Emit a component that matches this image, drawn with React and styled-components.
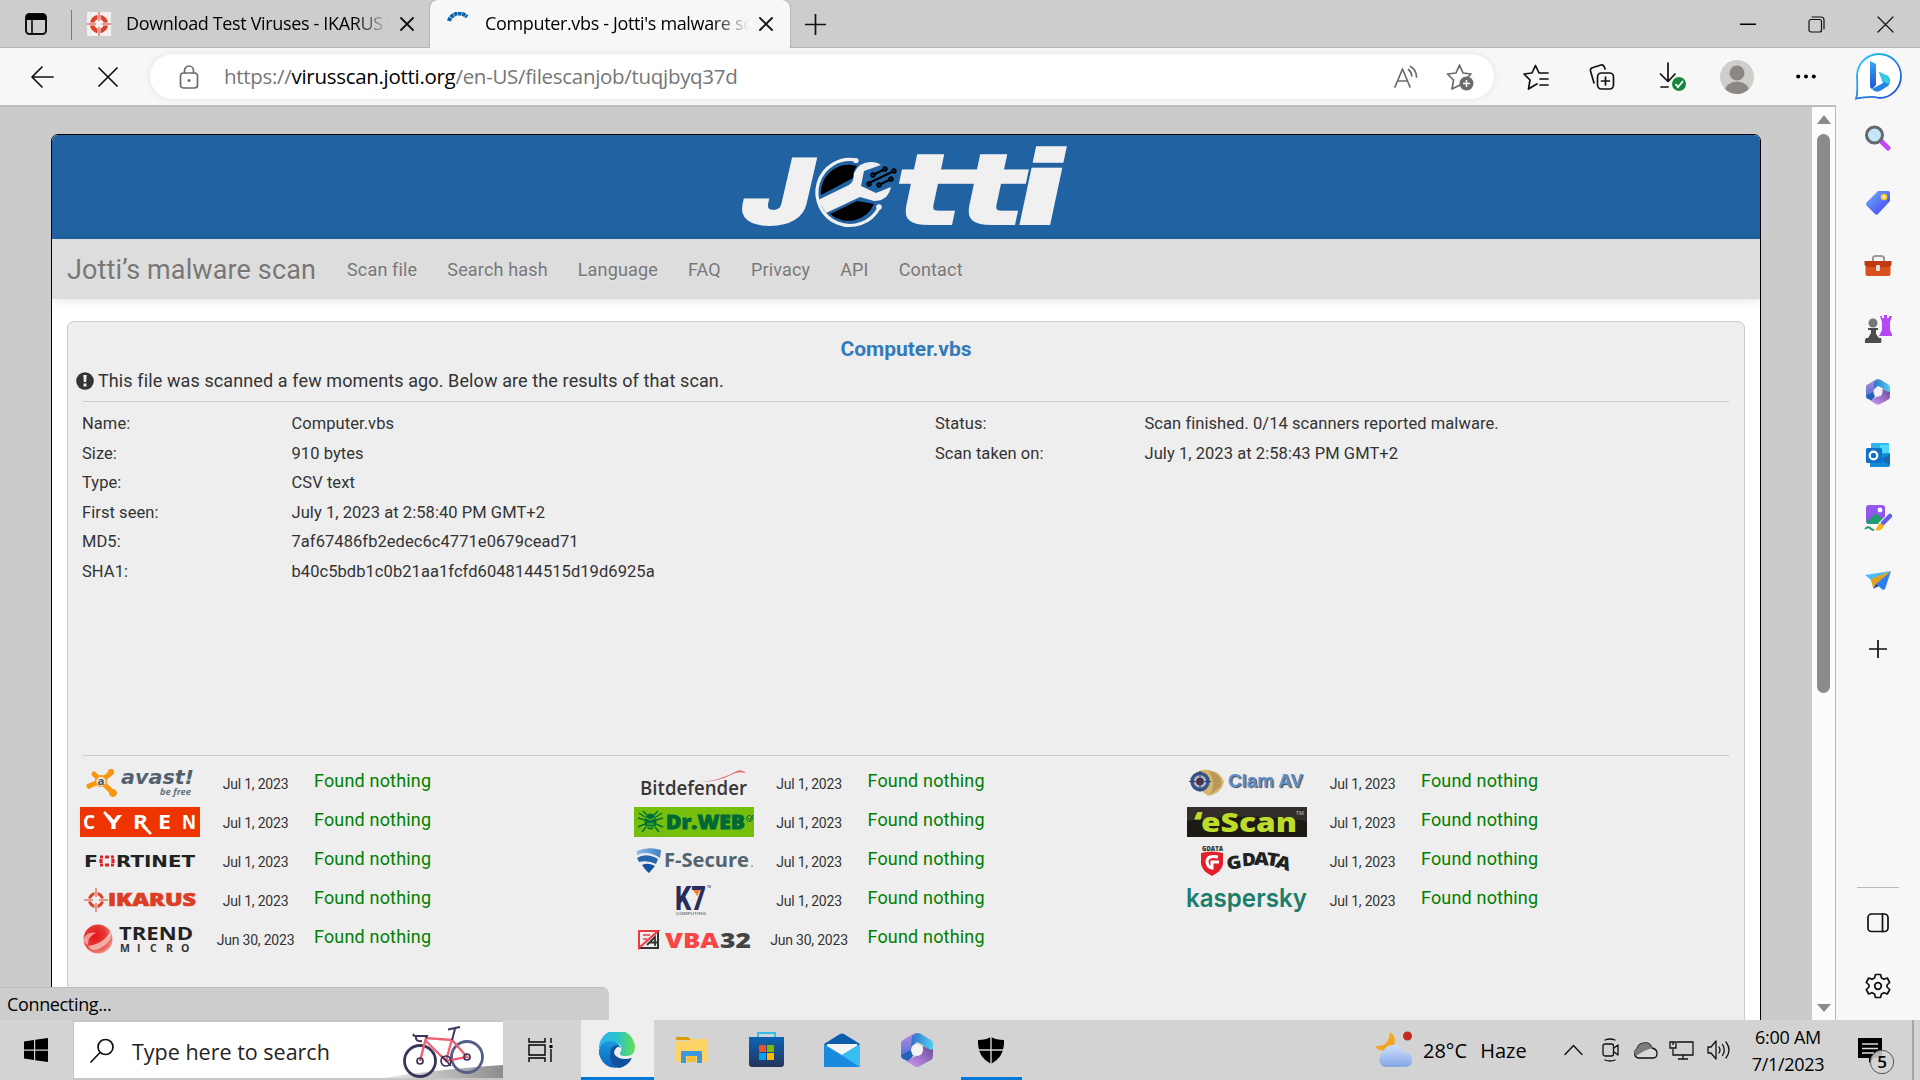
import React from "react";
import styled, { createGlobalStyle, css } from "styled-components";

const Global = createGlobalStyle`
  * { box-sizing: border-box; }
  html, body { margin: 0; padding: 0; overflow: hidden; }
  svg { display: block; flex: none; }
`;

const ui = css`font-family: "Open Sans", "Noto Sans", sans-serif;`;
const web = css`font-family: Roboto, "Liberation Sans", sans-serif;`;

const Screen = styled.div`
  ${ui}
  width: 1920px;
  height: 1080px;
  display: flex;
  flex-direction: column;
  background: #cbcbcb;
  overflow: hidden;
  color: #000;
`;

/* ---------- tab strip ---------- */
const TabStrip = styled.header`
  height: 48px;
  flex: none;
  display: flex;
  background: #cdcdcd;
  box-shadow: inset 0 -1px 0 #b5b5b5;
`;
const TabMenu = styled.div`
  width: 72px;
  display: flex;
  align-items: center;
  padding-left: 24px;
  position: relative;
  &::after {
    content: "";
    position: absolute;
    right: 0;
    top: 10px;
    width: 1px;
    height: 30px;
    background: #7a7a7a;
  }
`;
const Tab = styled.div`
  width: ${(p) => p.$w}px;
  padding-left: ${(p) => p.$pad}px;
  display: flex;
  align-items: center;
  height: 48px;
  ${(p) => p.$active && css`
    background: #f7f7f7;
    border-radius: 8px 8px 0 0;
    box-shadow: 0 0 2px rgba(0, 0, 0, 0.35);
    clip-path: inset(-2px -3px 0 -3px);
  `}
`;
const TabTitle = styled.span`
  width: ${(p) => p.$w}px;
  margin-left: ${(p) => p.$gap}px;
  font-size: 18px;
  line-height: 46px;
  padding-bottom: 2px;
  letter-spacing: -0.35px;
  white-space: nowrap;
  overflow: hidden;
  -webkit-mask-image: linear-gradient(90deg, #000 calc(100% - 36px), transparent);
  mask-image: linear-gradient(90deg, #000 calc(100% - 36px), transparent);
`;
const TabIcon = styled.div`
  width: 24px;
  height: 24px;
`;
const CloseMark = styled.div`
  margin-left: ${(p) => p.$gap}px;
`;
const NewTab = styled.div`
  width: 50px;
  display: flex;
  align-items: center;
  justify-content: center;
`;
const WindowButtons = styled.div`
  margin-left: auto;
  display: flex;
`;
const WindowButton = styled.div`
  width: 69px;
  display: flex;
  align-items: center;
  justify-content: center;
`;

/* ---------- main area ---------- */
const Main = styled.div`
  height: 972px;
  display: flex;
`;
const Left = styled.div`
  width: 1836px;
  display: flex;
  flex-direction: column;
  position: relative;
`;
const Toolbar = styled.div`
  height: 59px;
  flex: none;
  display: flex;
  align-items: center;
  background: #f7f7f7;
  border-bottom: 2px solid #bcbcbc;
`;
const Cell = styled.div`
  width: ${(p) => p.$w}px;
  height: 100%;
  flex: none;
  display: flex;
  align-items: center;
  justify-content: center;
  padding-top: ${(p) => p.$drop || 0}px;
`;
const AddressBar = styled.div`
  width: 1344px;
  flex: none;
  height: 45px;
  border-radius: 23px;
  background: #fff;
  box-shadow: 0 0 7px rgba(0, 0, 0, 0.09);
  display: flex;
  align-items: center;
  padding: 0 6px 0 28px;
`;
const Url = styled.div`
  margin-left: 24px;
  flex: 1;
  font-size: 20.5px;
  letter-spacing: -0.3px;
  line-height: 43px;
  color: #767676;
  white-space: nowrap;
  b { font-weight: 400; color: #000; }
`;
const Viewport = styled.div`
  flex: 1;
  min-height: 0;
  display: flex;
`;
const PageArea = styled.main`
  width: 1812px;
  padding: 27px 51px 0;
  overflow: hidden;
  background: #cbcbcb;
`;
const ScrollTrack = styled.div`
  width: 24px;
  background: #fcfcfc;
  border-right: 1px solid #b9b9b9;
  display: flex;
  flex-direction: column;
  align-items: center;
`;
const ScrollThumb = styled.div`
  width: 13px;
  height: 559px;
  border-radius: 7px;
  background: #8b8b8b;
`;
const ScrollArrow = styled.div`
  height: 27px;
  display: flex;
  align-items: center;
  justify-content: center;
  padding-bottom: 2px;
  &:last-child { margin-top: auto; height: 24px; padding: 0; }
`;
const StatusBubble = styled.div`
  position: absolute;
  left: 0;
  bottom: 0;
  width: 609px;
  height: 33px;
  padding-left: 7px;
  background: #cdcdcd;
  border-top: 1px solid #bdbdbd;
  border-radius: 0 7px 0 0;
  font-size: 18px;
  letter-spacing: -0.35px;
  line-height: 32px;
`;

/* ---------- web page ---------- */
const Site = styled.div`
  ${web}
  width: 1710px;
  height: 1100px;
  border: 1px solid #000;
  border-radius: 7px;
  background: #fff;
  color: #333;
  overflow: hidden;
`;
const Banner = styled.div`
  height: 104px;
  background: #2162a2;
  display: flex;
  justify-content: center;
`;
const Nav = styled.nav`
  height: 60px;
  padding: 2px 0 0 15px;
  background: #ddd;
  box-shadow: 0 1px 8px rgba(0, 0, 0, 0.12);
  display: flex;
  align-items: center;
  color: #777;
  text-shadow: 0 1px 0 rgba(255, 255, 255, 0.35);
`;
const Brand = styled.span`
  width: 265px;
  font-size: 27px;
  line-height: 58px;
  letter-spacing: 0.12px;
  white-space: nowrap;
`;
const NavLink = styled.a`
  padding: 0 15px;
  font-size: 18px;
  line-height: 58px;
  letter-spacing: 0.16px;
  white-space: nowrap;
`;
const Card = styled.section`
  margin: 22px 15px 0;
  height: 900px;
  border: 1px solid #ccc;
  border-radius: 7px;
  background: #eee;
  padding: 10px 14px 0;
`;
const Title = styled.h1`
  margin: 0;
  font-size: 21px;
  line-height: 34px;
  font-weight: 700;
  color: #337ab7;
  text-align: center;
`;
const Notice = styled.p`
  margin: 0 0 0 -6px;
  display: flex;
  align-items: center;
  gap: 4px;
  font-size: 18px;
  letter-spacing: 0.11px;
  line-height: 30px;
`;
const Rule = styled.hr`
  margin: 5px 1px 0;
  border: 0;
  height: 1px;
  background: #ccc;
`;
const Facts = styled.div`
  display: flex;
  height: 348px;
  padding-top: 7px;
`;
const FactList = styled.dl`
  margin: 0;
  flex: none;
  width: 853px;
`;
const Fact = styled.div`
  display: grid;
  grid-template-columns: 209.5px 1fr;
  font-size: 16.5px;
  letter-spacing: 0.06px;
  line-height: 29.6px;
  dt, dd { margin: 0; }
`;
const Results = styled.div`
  display: grid;
  grid-template-columns: repeat(3, 553.5px);
  grid-auto-rows: 39px;
  padding-top: 12px;
  margin-left: -2px;
`;
const Result = styled.div`
  display: flex;
  height: 30px;
  align-items: center;
`;
const ScanDate = styled.span`
  width: 111px;
  padding-top: 2px;
  text-align: center;
  font-size: 14px;
  letter-spacing: -0.2px;
`;
const Verdict = styled.span`
  margin-left: 3px;
  font-size: 18px;
  line-height: 26px;
  letter-spacing: 0.17px;
  padding-bottom: 4px;
  color: green;
`;

/* ---------- sidebar ---------- */
const Sidebar = styled.aside`
  width: 84px;
  background: #f7f7f7;
  display: flex;
  flex-direction: column;
  align-items: center;
  padding-top: 1px;
`;
const SideItem = styled.div`
  height: ${(p) => p.$h || 63}px;
  flex: none;
  display: flex;
  align-items: center;
  justify-content: center;
`;
const SideRule = styled.div`
  width: 42px;
  height: 1px;
  margin-top: auto;
  margin-bottom: 6px;
  background: #b9b9b9;
`;

/* ---------- taskbar ---------- */
const Taskbar = styled.footer`
  height: 60px;
  display: flex;
  background: #d3d3d3;
`;
const TaskCell = styled.div`
  width: ${(p) => p.$w}px;
  height: 60px;
  padding-right: ${(p) => p.$shift || 0}px;
  display: flex;
  align-items: center;
  justify-content: center;
  background: ${(p) => (p.$active ? "#eee" : "transparent")};
  box-shadow: ${(p) => (p.$open ? "inset 0 -3px 0 #0078d7" : "none")};
`;
const SearchBox = styled.div`
  width: 430px;
  height: 60px;
  background: #fff;
  border: solid #c6c6c6;
  border-width: 2px 0 2px 1px;
  display: flex;
  align-items: center;
  padding-left: 16px;
  overflow: hidden;
`;
const SearchText = styled.span`
  width: 254px;
  margin-left: 17px;
  padding-top: 3px;
  font-size: 21.5px;
  white-space: nowrap;
  color: #222;
`;
const Tray = styled.div`
  margin-left: auto;
  display: flex;
  align-items: center;
`;
const Weather = styled.div`
  width: 176px;
  display: flex;
  align-items: center;
  gap: 9px;
  font-size: 20px;
  white-space: nowrap;
  word-spacing: 8px;
`;
const Clock = styled.div`
  width: 102px;
  text-align: center;
  font-size: 18px;
  line-height: 27px;
  padding: 1px 2px 0 0;
  letter-spacing: -0.3px;
`;
const ShowDesktop = styled.div`
  width: 8px;
  height: 60px;
  border-left: 2px solid #a5a5a5;
`;

const line = { fill: "none", stroke: "#111", strokeWidth: 1.7, strokeLinecap: "round", strokeLinejoin: "round" };

const Cross = ({ s = 12, w = 1.8 }) => (
  <svg width={s + 2} height={s + 2} viewBox={`-1 -1 ${s + 2} ${s + 2}`}>
    <path d={`M0 0L${s} ${s}M${s} 0L0 ${s}`} {...line} strokeWidth={w} />
  </svg>
);
const Plus = ({ s }) => (
  <svg width={s} height={s} viewBox={`0 0 ${s} ${s}`}>
    <path d={`M${s / 2} 0V${s}M0 ${s / 2}H${s}`} {...line} strokeLinecap="butt" />
  </svg>
);
const Crosshair = ({ size }) => (
  <svg width={size} height={size} viewBox="0 0 24 24">
    <rect width="24" height="24" fill="#f5f0ee" />
    <circle cx="12" cy="12" r="7" fill="none" stroke="#d9412a" strokeWidth="4.4" />
    <path d="M12 1V23M1 12H23" stroke="#f5f0ee" strokeWidth="3" />
    <path d="M12 0V9M12 15V24M0 12H9M15 12H24" stroke="#d9412a" strokeWidth="1" />
  </svg>
);
const Office = ({ w, h, id }) => (
  <svg width={w} height={h} viewBox="0 0 32 34">
    <defs>
      <linearGradient id={`${id}a`} x1="0" y1="0" x2="0" y2="1"><stop stopColor="#b98bdc" /><stop offset="1" stopColor="#3c6fd6" /></linearGradient>
      <linearGradient id={`${id}b`}><stop stopColor="#2f6fc9" /><stop offset="1" stopColor="#4fd0f5" /></linearGradient>
      <linearGradient id={`${id}c`} x1="1" y1="0" x2="0" y2="1"><stop stopColor="#6a4a98" /><stop offset="1" stopColor="#cf9bf6" /></linearGradient>
    </defs>
    <path d="M15 0C17 0 18 .5 19 1L11 7V24L7 28L2 25Q0 24 0 21V10Q0 8 2 7L12 1Q13 0 15 0Z" fill={`url(#${id}a)`} />
    <path d="M11 3L16 0Q18 0 20 1L30 7Q32 8 32 11V20L22 12L16 9L10 14Z" fill={`url(#${id}b)`} />
    <path d="M32 16V23Q32 26 30 27L19 33Q16 35 13 33L5 28L11 25L21 20L22 13L30 17Z" fill={`url(#${id}c)`} />
    <path d="M0 22L10 17L12 23L7 28L2 26Q0 25 0 22Z" fill="#2462b8" />
    <circle cx="16" cy="17" r="6" fill="#f2f2f2" />
  </svg>
);

/* ---------- banner ---------- */
const Letter = ({ x, size, w, sw, face, tilt = -12, children }) => (
  <text transform={`translate(${x} 89) skewX(${tilt})`} fontSize={size} textLength={w} lengthAdjust="spacingAndGlyphs"
    fontFamily={face} fontWeight="900" fill="#f0f0f0" stroke="#f0f0f0" strokeWidth={sw}>{children}</text>
);
const JottiLogo = () => (
  <svg width="380" height="104" viewBox="-4 0 380 104">
    <Letter x={17} size={90} w={69} sw={2} face="Inter, sans-serif" tilt={-13}>J</Letter>
    <Letter x={170} size={98} w={66} sw={2} face="DejaVu Sans, sans-serif">t</Letter>
    <Letter x={233} size={98} w={66} sw={2} face="DejaVu Sans, sans-serif">t</Letter>
    <Letter x={288} size={101} w={54} sw={2} face="DejaVu Sans, sans-serif">i</Letter>
    <path d="M136 25A33 33 0 1 0 159 73" fill="none" stroke="#f0f0f0" strokeWidth="3.2" />
    <circle cx="136" cy="25.500" r="2.600" fill="#f0f0f0" />
    <circle cx="159" cy="72" r="2.800" fill="#f0f0f0" />
    <path d="M101 60A28 28 0 0 1 137 31Q133 36 133 43Z" fill="#000" />
    <path d="M110 79L137 66L154 69A28 28 0 0 1 110 79Z" fill="#000" />
    <path d="M98 65L129 50Q134 47 134 38Q139 27 151 27Q157 27 161 30L144 36L141 51L156 58L171 52Q168 66 154 66L140 62L106 78Z" fill="#f0f0f0" />
    <g stroke="#000" strokeWidth="2" fill="none">
      <path d="M153 40L165 34M149 48L174 36M159 50L171 44" />
      {[[153, 40], [165, 34], [149, 49], [174, 36], [159, 50], [171, 44]].map(([x, y]) => <circle key={`${x}-${y}`} cx={x} cy={y} r="1.7" fill="#2162a2" />)}
    </g>
  </svg>
);

/* ---------- scanner logos, each 120 x 30 ---------- */
const Logo = ({ children, bg }) => (
  <svg width="120" height="30" viewBox="0 0 120 30">
    {bg && <rect width="120" height="30" fill={bg} />}
    {children}
  </svg>
);
const Word = ({ x, y, w, s, c, f = "Open Sans", b = 700, children, ...rest }) => (
  <text x={x} y={y} textLength={w} lengthAdjust="spacingAndGlyphs" fontSize={s} fill={c} fontFamily={`"${f}", sans-serif`} fontWeight={b} {...rest}>{children}</text>
);

const Avast = () => (
  <Logo>
    <g stroke="#f9960f" strokeLinecap="round" fill="#f9960f">
      <path d="M21 13L31 5M21 13L9 18M21 13L33 25M21 13L14 6" strokeWidth="5" />
      <circle cx="31" cy="4" r="2.700" /><circle cx="9" cy="19" r="1.500" /><circle cx="33" cy="25" r="3.500" /><circle cx="21" cy="13" r="5.500" />
    </g>
    <circle cx="21" cy="13.500" r="4.700" fill="#f1e6d6" />
    <Word x="17.500" y="17" w="7" s="11" c="#465a68">a</Word>
    <Word x="41" y="16" w="73" s="19" c="#52616d" f="DejaVu Sans" fontStyle="oblique">avast!</Word>
    <Word x="80" y="27" w="31" s="9.500" c="#63717b" fontStyle="italic">be free</Word>
  </Logo>
);
const Cyren = () => (
  <Logo bg="#ee3500">
    {[["C", 3, 12], ["Y", 25, 17], ["R", 53, 15], ["E", 78, 13], ["N", 102, 14]].map(([t, x, w]) => (
      <Word key={t} x={x} y="22" w={w} s="19" c="#fff">{t}</Word>
    ))}
    <path d="M24 5L33 14M62 18L71 27" stroke="#fff" strokeWidth="2.500" />
  </Logo>
);
const Fortinet = () => (
  <Logo>
    <Word x="4" y="20.500" w="14" s="15" c="#222" f="DejaVu Sans">F</Word>
    <path d="M20 11H23M25 11H29M31 11H34M20 19H23M25 19H29M31 19H34M21 13V17M33 13V17" stroke="#e3212c" strokeWidth="3.200" />
    <Word x="36" y="20.500" w="79" s="15" c="#222" f="DejaVu Sans">RTINET</Word>
  </Logo>
);
const Ikarus = () => (
  <Logo>
    <circle cx="16" cy="15" r="6.500" fill="none" stroke="#d9412a" strokeWidth="3" />
    <path d="M16 7V23M8 15H24" stroke="#eee" strokeWidth="3" />
    <path d="M16 3V12M16 18V27M4 15H13M19 15H28" stroke="#d9412a" strokeWidth="1" />
    <Word x="28" y="21" w="88" s="17" c="#dc3d25" b={800} stroke="#dc3d25" strokeWidth=".6">IKARUS</Word>
  </Logo>
);
const Trend = () => (
  <Logo>
    <defs><radialGradient id="trend" cx=".4" cy=".4" r=".7"><stop stopColor="#e8151b" /><stop offset=".55" stopColor="#e33a35" /><stop offset="1" stopColor="#f3a79b" /></radialGradient></defs>
    <circle cx="18" cy="15" r="14.500" fill="url(#trend)" />
    <path d="M8 22Q24 20 31 6Q34 17 19 25Q12 28 8 22Z" fill="#f6d3cc" opacity=".75" />
    <path d="M3 15Q8 7 16 9Q8 12 8 21Q4 19 3 15Z" fill="#fff" opacity=".5" />
    <Word x="39" y="16" w="74" s="18" c="#222" b={700}>TREND</Word>
    {[["M", 40], ["I", 57], ["C", 70], ["R", 86], ["O", 101]].map(([t, x]) => <Word key={t} x={x} y="28" s="10.500" c="#333">{t}</Word>)}
  </Logo>
);
const Bitdefender = () => (
  <Logo>
    <path d="M66 14Q85 13 103 3Q108 1 112 5Q105 3 99 6Q84 14 66 14Z" fill="#e0474c" opacity=".8" />
    <Word x="6" y="27" w="107" s="20" c="#3b3536" b={600}>Bitdefender</Word>
  </Logo>
);
const DrWeb = () => (
  <Logo bg="#76c00d">
    <g fill="none" stroke="#00703a" strokeWidth="1.500">
      <path d="M11 10L5 6M11 13L4 11M11 17L4 20M12 20L8 25M22 10L28 6M22 13L29 11M22 17L29 20M21 20L25 25M13 8L9 4M20 8L24 4" />
    </g>
    <ellipse cx="16.500" cy="14.500" rx="6" ry="8" fill="#00703a" />
    <path d="M12 11L16 13L21 11M13 17H20M12 20L21 20" stroke="#76c00d" fill="none" />
    <Word x="32" y="22" w="79" s="18.500" c="#006837" b={800} stroke="#006837" strokeWidth=".8">Dr.WEB</Word>
    <circle cx="115.500" cy="11.500" r="3" fill="none" stroke="#006837" /><path d="M114 11L116 13L119 8" fill="none" stroke="#006837" />
  </Logo>
);
const FSecure = () => (
  <Logo>
    <defs><linearGradient id="fs"><stop stopColor="#8db9e8" /><stop offset="1" stopColor="#3f7ec4" /></linearGradient></defs>
    <path d="M3 5Q14 0 27 4L26 12Q14 4 3 9Z" fill="url(#fs)" />
    <path d="M3 12Q12 6 24 13L22 18Q14 14 5 16Z" fill="#2565af" />
    <path d="M8 19Q14 16 21 20L15 27Q12 25 8 19Z" fill="#1553a0" />
    <Word x="30" y="21" w="85" s="20" c="#51646f" b={700}>F-Secure</Word>
    <circle cx="118" cy="20" r="1" fill="#91a3ad" />
  </Logo>
);
const K7 = () => (
  <Logo>
    <Word x="41" y="25" w="31" s="34" c="#292c58" f="Roboto" b={800}>K7</Word>
    <path d="M59 5H66L63 11Z" fill="#f0802f" />
    <Word x="42" y="30" w="30" s="3.500" c="#666" b={600}>COMPUTING</Word>
    <Word x="73" y="3" w="4" s="3" c="#666">TM</Word>
  </Logo>
);
const Vba = () => (
  <Logo>
    <rect x="5" y="7" width="19" height="17" fill="#eee" stroke="#333" strokeWidth="2" />
    <path d="M5 24V7H24L5 24Z" fill="#eee" stroke="#ee3a3a" strokeWidth="2" />
    <path d="M9 11H16M9 15H13" fill="none" stroke="#ee3a3a" strokeWidth="1.500" />
    <path d="M13 21L21 13V22M15 18.500H23" fill="none" stroke="#333" strokeWidth="1.800" />
    <Word x="31" y="23.500" w="54" s="21" c="#f94545" b={800}>VBA</Word>
    <Word x="86" y="23.500" w="31" s="21" c="#444" b={800}>32</Word>
  </Logo>
);
const Clam = () => (
  <Logo>
    <path d="M5 10Q10 0 22 2Q34 4 37 14Q34 26 21 28Q14 22 5 18Z" fill="#d6b66f" />
    <path d="M22 3Q36 6 34 18L23 27Q30 15 22 3Z" fill="#9f8048" opacity=".55" />
    <circle cx="13" cy="13.500" r="8" fill="none" stroke="#31538e" strokeWidth="3.500" />
    <circle cx="13" cy="13.500" r="6" fill="#aab4cd" /><circle cx="13" cy="13.500" r="3.800" fill="#5a2430" />
    <path d="M13 3V24M2 13.500H24" stroke="#2c436b" strokeWidth="1" />
    <Word x="41" y="19" w="75" s="17.500" c="#5a8fcb" f="Liberation Sans" style={{ textShadow: "1px 1px 1px #444c55" }}>Clam AV</Word>
  </Logo>
);
const EScan = () => (
  <Logo bg="#1d1914">
    <path d="M0 14Q60 5 120 14V0H0Z" fill="#332e29" />
    <Word x="7" y="24" w="9" s="26" c="#bddb2a" b={800}>‘</Word>
    <Word x="14" y="25" w="96" s="27" c="#bddb2a" b={800}>eScan</Word>
    <Word x="109" y="8" w="8" s="5" c="#999">TM</Word>
  </Logo>
);
const GData = () => (
  <Logo>
    <Word x="15" y="5" w="21" s="6" c="#333" b={800}>GDATA</Word>
    <path d="M14 7Q25 4 36 7V18Q35 25 25 30Q15 25 14 18Z" fill="#e21f2b" />
    <path d="M31 11Q21 9 20 15Q20 21 25 22V16H32" fill="none" stroke="#fff" strokeWidth="3" />
    {[["G", 40, 23, 15, -9], ["D", 55, 20, 14, -3], ["A", 67, 19, 15, 3], ["T", 79, 20, 13, 9], ["A", 88, 23, 15, 17]].map(([t, x, y, w, r]) => (
      <Word key={x} x={x} y={y} w={w} s="18" c="#222" b={800} transform={`rotate(${r} ${x + 7} ${y - 3})`}>{t}</Word>
    ))}
  </Logo>
);
const Kaspersky = () => (
  <Logo><Word x="-1" y="22" w="121" s="25" c="#1c7d6b" f="Inter" b={600}>kaspersky</Word></Logo>
);

const SCANNERS = [
  [Avast, "Jul 1, 2023"], [Bitdefender, "Jul 1, 2023"], [Clam, "Jul 1, 2023"],
  [Cyren, "Jul 1, 2023"], [DrWeb, "Jul 1, 2023"], [EScan, "Jul 1, 2023"],
  [Fortinet, "Jul 1, 2023"], [FSecure, "Jul 1, 2023"], [GData, "Jul 1, 2023"],
  [Ikarus, "Jul 1, 2023"], [K7, "Jul 1, 2023"], [Kaspersky, "Jul 1, 2023"],
  [Trend, "Jun 30, 2023"], [Vba, "Jun 30, 2023"],
];
const FILE_FACTS = [
  ["Name:", "Computer.vbs"], ["Size:", "910 bytes"], ["Type:", "CSV text"],
  ["First seen:", "July 1, 2023 at 2:58:40 PM GMT+2"],
  ["MD5:", "7af67486fb2edec6c4771e0679cead71"],
  ["SHA1:", "b40c5bdb1c0b21aa1fcfd6048144515d19d6925a"],
];
const SCAN_FACTS = [
  ["Status:", "Scan finished. 0/14 scanners reported malware."],
  ["Scan taken on:", "July 1, 2023 at 2:58:43 PM GMT+2"],
];
const NAV = ["Scan file", "Search hash", "Language", "FAQ", "Privacy", "API", "Contact"];

const BikeArt = () => (
  <svg width="120" height="56" viewBox="384 1022 120 56">
    <defs><linearGradient id="road"><stop stopColor="#e9e9e9" /><stop offset="1" stopColor="#8c8c8c" /></linearGradient></defs>
    <path d="M386 1078Q430 1070 504 1065V1078Z" fill="url(#road)" />
    <g fill="none" stroke="#3b355c" strokeWidth="2.800">
      <circle cx="421" cy="1061" r="15.500" /><circle cx="468" cy="1057" r="15.500" stroke="#565f88" />
    </g>
    <path d="M421 1061L427 1038L453 1040L468 1057L447 1061L427 1041M447 1061L453 1039" fill="none" stroke="#ee6374" strokeWidth="2.400" />
    <path d="M453 1040L456 1029M449 1029.500L461 1027M427 1038L428 1036H417Q413 1036 415 1034M417 1036Q416 1042 423 1041" fill="none" stroke="#3b355c" strokeWidth="2" />
    <g fill="none" stroke="#3b355c" strokeWidth="1.700"><circle cx="447" cy="1061" r="5" /><circle cx="421" cy="1061" r="3" /><circle cx="468" cy="1057" r="3" /><path d="M443 1056L452 1066" /></g>
  </svg>
);

export default function App() {
  return (
    <Screen>
      <Global />
      <TabStrip>
        <TabMenu>
          <svg width="24" height="24" viewBox="0 0 24 24">
            <rect x="2" y="2" width="20" height="20" rx="3.500" {...line} strokeWidth="2" />
            <path d="M2 8V5Q2 2 5 2H19Q22 2 22 5V8Z" fill="#000" /><path d="M8 8V22" {...line} />
          </svg>
        </TabMenu>
        <Tab $w={358} $pad={15}>
          <TabIcon><Crosshair size={24} /></TabIcon>
          <TabTitle $w={264} $gap={15}>Download Test Viruses - IKARUS Security</TabTitle>
          <CloseMark $gap={10}><Cross /></CloseMark>
        </Tab>
        <Tab $w={360} $pad={17} $active>
          <TabIcon>
            <svg width="24" height="24" viewBox="0 0 24 24">
              <path d="M2 9A10.500 10.500 0 0 1 20 5" fill="none" stroke="#0c63ab" strokeWidth="4" strokeDasharray="3.600 .5" />
            </svg>
          </TabIcon>
          <TabTitle $w={264} $gap={14}>Computer.vbs - Jotti's malware scan</TabTitle>
          <CloseMark $gap={10}><Cross /></CloseMark>
        </Tab>
        <NewTab><Plus s={21} /></NewTab>
        <WindowButtons>
          <WindowButton><svg width="16" height="2"><rect width="16" height="1.500" y=".5" /></svg></WindowButton>
          <WindowButton>
            <svg width="17" height="17" viewBox="0 0 17 17"><g {...line} strokeWidth="1.200"><rect x="1" y="3.500" width="12.500" height="12.500" rx="2" /><path d="M4 1H13Q16 1 16 4V13" /></g></svg>
          </WindowButton>
          <WindowButton><Cross s={15} w={1.2} /></WindowButton>
        </WindowButtons>
      </TabStrip>

      <Main>
        <Left>
          <Toolbar>
            <Cell $w={84}><svg width="24" height="22" viewBox="0 0 24 22"><path d="M23 11H2M12 1L2 11L12 21" {...line} /></svg></Cell>
            <Cell $w={48}><Cross s={18} w={1.7} /></Cell>
            <Cell $w={18} />
            <AddressBar>
              <svg width="22" height="24" viewBox="0 0 22 24"><g {...line} stroke="#6b6b6b"><rect x="2.500" y="8" width="17" height="15" rx="3" /><path d="M6.500 8V5.500A4.500 4.500 0 0 1 15.500 5.500V8" /></g><circle cx="11" cy="15.500" r="1.500" fill="#6b6b6b" /></svg>
              <Url>https://<b>virusscan.jotti.org</b>/en-US/filescanjob/tuqjbyq37d</Url>
              <Cell $w={52}>
                <svg width="24" height="24" viewBox="0 0 24 24"><g {...line} stroke="#6b6b6b"><path d="M1 22L8.500 4L16 22M4 16H13" /><path d="M14.500 4.500Q17.500 7 17.800 11M16.500 1.500Q22.500 5 22.500 12" /></g></svg>
              </Cell>
              <Cell $w={56}>
                <svg width="28" height="28" viewBox="0 0 28 28"><path d="M14 22L6 26L7.500 17L1.500 11L10 10L13.500 2L17 10L25 11L22 14" {...line} stroke="#6b6b6b" /><circle cx="20.500" cy="20.500" r="7" fill="#6b6b6b" /><path d="M20.500 17V24M17 20.500H24" stroke="#fff" strokeWidth="1.500" /></svg>
              </Cell>
            </AddressBar>
            <Cell $w={84}><svg width="26" height="26" viewBox="0 0 26 26"><path d="M12 21L5.500 25L7 16L1 10L9 9L12.500 1.500L16 9H25M17 15H25M17 21H25M12 21L14 20" {...line} /></svg></Cell>
            <Cell $w={48}><svg width="26" height="26" viewBox="0 0 26 26"><g {...line}><rect x="8.500" y="9" width="16" height="16" rx="4" /><path d="M16.500 13V21M12.500 17H20.500M5 19L1.500 7Q1 4 4 3.500L12 1Q15 .5 16 5" /></g></svg></Cell>
            <Cell $w={94}>
              <svg width="28" height="31" viewBox="0 0 28 31"><path d="M9 2V20M1.500 13L9 20.500L16 13M2 26H9" {...line} /><circle cx="20" cy="23" r="7" fill="#15873b" /><path d="M16.500 23L19 26L24 20" fill="none" stroke="#fff" strokeWidth="1.800" /></svg>
            </Cell>
            <Cell $w={34}>
              <svg width="34" height="34" viewBox="0 0 34 34"><clipPath id="face"><circle cx="17" cy="17" r="17" /></clipPath><g clipPath="url(#face)"><rect width="34" height="34" fill="#d0ceca" /><circle cx="17" cy="13" r="7.500" fill="#8b8785" /><ellipse cx="17" cy="31" rx="12" ry="9.500" fill="#8b8785" /></g></svg>
            </Cell>
            <Cell $w={22} />
            <Cell $w={60}><svg width="20" height="5"><circle cx="2.200" cy="2.500" r="2" /><circle cx="10" cy="2.500" r="2" /><circle cx="17.800" cy="2.500" r="2" /></svg></Cell>
          </Toolbar>

          <Viewport>
            <PageArea>
              <Site>
                <Banner><JottiLogo /></Banner>
                <Nav>
                  <Brand>Jotti’s malware scan</Brand>
                  {NAV.map((n) => <NavLink key={n}>{n}</NavLink>)}
                </Nav>
                <Card>
                  <Title>Computer.vbs</Title>
                  <Notice>
                    <svg width="18" height="18" viewBox="0 0 18 18"><circle cx="9" cy="9" r="8.800" fill="#333" /><path d="M7.300 3H10.700L10.200 10H7.800ZM7.500 11.500H10.500V14.500H7.500Z" fill="#eee" /></svg>
                    This file was scanned a few moments ago. Below are the results of that scan.
                  </Notice>
                  <Rule />
                  <Facts>
                    {[FILE_FACTS, SCAN_FACTS].map((facts, i) => (
                      <FactList key={i}>
                        {facts.map(([k, v]) => <Fact key={k}><dt>{k}</dt><dd>{v}</dd></Fact>)}
                      </FactList>
                    ))}
                  </Facts>
                  <Rule />
                  <Results>
                    {SCANNERS.map(([Mark, date], i) => (
                      <Result key={i}><Mark /><ScanDate>{date}</ScanDate><Verdict>Found nothing</Verdict></Result>
                    ))}
                  </Results>
                </Card>
              </Site>
            </PageArea>
            <ScrollTrack>
              <ScrollArrow><svg width="14" height="9"><path d="M0 9L7 0L14 9Z" fill="#8b8b8b" /></svg></ScrollArrow>
              <ScrollThumb />
              <ScrollArrow><svg width="14" height="8"><path d="M0 0H14L7 8Z" fill="#8b8b8b" /></svg></ScrollArrow>
            </ScrollTrack>
          </Viewport>
          <StatusBubble>Connecting...</StatusBubble>
        </Left>

        <Sidebar>
          <SideItem $h={56}>
            <svg width="48" height="50" viewBox="0 0 48 50">
              <defs>
                <linearGradient id="bing" x1="0" y1="0" x2="1" y2="1"><stop stopColor="#20d8f4" /><stop offset=".6" stopColor="#2a78e0" /><stop offset="1" stopColor="#1b4ac8" /></linearGradient>
                <linearGradient id="bingb" x1="0" y1="0" x2="0" y2="1"><stop stopColor="#37a5f5" /><stop offset="1" stopColor="#1b54d0" /></linearGradient>
              </defs>
              <path d="M2 46.500Q4 42 3 24A22 22 0 1 1 25 46Q18 43.500 2 46.500Z" fill="#fff" stroke="url(#bing)" strokeWidth="1.800" />
              <path d="M16 9L22 12V33L18 37Q16 36 16 33Z" fill="url(#bingb)" />
              <path d="M25 20L34 24Q38 29 34 34L26 39Q21 41 18 37L29 31Z" fill="#2384e5" /><path d="M25 20L34 24Q37 28 35 32L29 30Z" fill="#34cbe0" />
            </svg>
          </SideItem>
          <SideItem $h={66}>
            <svg width="26" height="26" viewBox="0 0 26 26"><path d="M16 16L23 23" stroke="#c548f4" strokeWidth="5" strokeLinecap="round" /><circle cx="9.500" cy="10" r="8" fill="#c4e6f8" stroke="#66696b" strokeWidth="3" /></svg>
          </SideItem>
          <SideItem>
            <svg width="26" height="26" viewBox="0 0 26 26"><defs><linearGradient id="tag" x1="0" y1="0" x2="1" y2="1"><stop stopColor="#71b6fa" /><stop offset="1" stopColor="#4239ee" /></linearGradient></defs><path d="M13 1L23 1Q25 1 25 4V11L13 24Q11 26 9 23L2 16Q0 14 2 12Z" fill="url(#tag)" /><circle cx="19" cy="7" r="2.300" fill="#fff" stroke="#ffc928" strokeWidth="2" /></svg>
          </SideItem>
          <SideItem>
            <svg width="28" height="22" viewBox="0 0 28 22"><path d="M9 6V3Q9 1 12 1H16Q20 1 20 3V6" fill="none" stroke="#999" strokeWidth="2" /><rect x="1.500" y="6" width="25" height="15" rx="2" fill="#d9501e" /><path d="M.5 6H27.500V10Q25 12.500 23 12H5Q2 12 .5 10Z" fill="#bf3a13" /><rect x="12" y="10" width="4" height="6" rx="1" fill="#ddd" /></svg>
          </SideItem>
          <SideItem>
            <svg width="28" height="28" viewBox="0 0 28 28"><path d="M16 1H18V3H20V0H23V3H25V1H28L26 7V15L28 19V21H15L18 15V7Z" fill="#b548f5" /><circle cx="9" cy="8" r="4.500" fill="#777" /><path d="M4 13H14V15H12L12 19L15 23H17Q18 25 17 28H1Q0 25 2 23H4L7 18V15H4Z" fill="#4c4c4c" /></svg>
          </SideItem>
          <SideItem><Office w={24} h={26} id="s" /></SideItem>
          <SideItem>
            <svg width="24" height="24" viewBox="0 0 24 24"><rect x="5" width="18" height="18" rx="1" fill="#31b5ee" /><rect x="14" y="2" width="9" height="8" fill="#50d9ff" /><path d="M4 12L24 10V22Q24 24 22 24H4Z" fill="#128bd8" /><path d="M24 11V22L14 17Z" fill="#1669b5" /><rect y="5" width="16" height="15" rx="1.500" fill="#0c72cc" /><circle cx="7.500" cy="12.500" r="3.800" fill="none" stroke="#fff" strokeWidth="2.200" /></svg>
          </SideItem>
          <SideItem>
            <svg width="28" height="28" viewBox="0 0 28 28"><rect x="2" y="1" width="19" height="19" rx="3" fill="#9355eb" /><circle cx="16" cy="6" r="2.400" fill="#fff" /><path d="M2 18L11 10Q12 9 14 11L21 17V20H4Z" fill="#1d9c6c" /><path d="M28 11L17 22" stroke="#f7f7f7" strokeWidth="8" /><path d="M26 12L19 19" stroke="#655af0" strokeWidth="4.500" strokeLinecap="round" /><path d="M20 22Q17 28 11 26Q13 25 14 21L17 19Z" fill="#f4b31d" /><path d="M1 25Q4 22 6 24T10 26" fill="none" stroke="#1d9c6c" strokeWidth="1.800" /></svg>
          </SideItem>
          <SideItem>
            <svg width="26" height="20" viewBox="0 0 26 20"><path d="M0 4L26 0L8 13L5 8Z" fill="#48bdf4" /><path d="M26 0L6 8L8 17L11 14Z" fill="#e7a01d" /><path d="M26 0L11 13L18 19L20 18Z" fill="#2d80eb" /><path d="M11 13L8 18L14 15Z" fill="#174fa4" /></svg>
          </SideItem>
          <SideItem $h={73}><Plus s={18} /></SideItem>
          <SideRule />
          <SideItem $h={57}><svg width="22" height="20" viewBox="0 0 22 20"><rect x="1" y="1" width="20" height="17.500" rx="3.500" {...line} /><path d="M15.500 1V18.500" {...line} /></svg></SideItem>
          <SideItem $h={69}>
            <svg width="26" height="26" viewBox="0 0 26 26"><g {...line}><path d="M10.500 1.500H15.500L16.500 5L19 6.300L22.300 5L24.700 9.500L22 12V14L24.700 16.500L22.300 21L19 19.700L16.500 21L15.500 24.500H10.500L9.500 21L7 19.700L3.700 21L1.300 16.500L4 14V12L1.300 9.500L3.700 5L7 6.300L9.500 5Z" /><circle cx="13" cy="13" r="3.300" /></g></svg>
          </SideItem>
        </Sidebar>
      </Main>

      <Taskbar>
        <TaskCell $w={73} $shift={1}><svg width="24" height="24" viewBox="0 0 24 24"><path d="M0 3.500L10 2V11.500H0ZM11.200 1.800L24 0V11.500H11.200ZM0 12.700H10V22L0 20.500ZM11.200 12.700H24V24L11.200 22.200Z" /></svg></TaskCell>
        <SearchBox>
          <svg width="25" height="25" viewBox="0 0 25 25"><circle cx="15.500" cy="9" r="7.500" {...line} /><path d="M10 14.500L1 24" {...line} /></svg>
          <SearchText>Type here to search</SearchText>
          <BikeArt />
        </SearchBox>
        <TaskCell $w={78} $shift={4}>
          <svg width="25" height="24" viewBox="0 0 25 24"><g fill="none" stroke="#000" strokeWidth="1.400"><path d="M1 0V4H17V0M1 24V20H17V24M1 7H17V17H1ZM23 0V5M23 11V24" /></g><rect x="21.500" y="7" width="3" height="3" /></svg>
        </TaskCell>
        <TaskCell $w={73} $shift={1} $active $open>
          <svg width="36" height="36" viewBox="0 0 36 36">
            <defs>
              <linearGradient id="e1"><stop stopColor="#2bb4ec" /><stop offset=".5" stopColor="#2bc1cf" /><stop offset="1" stopColor="#66e04c" /></linearGradient>
              <linearGradient id="e2" x1="0" y1="0" x2="0" y2="1"><stop stopColor="#1a9ae0" /><stop offset="1" stopColor="#0a63b8" /></linearGradient>
            </defs>
            <path d="M0 17A18 18 0 0 1 36 15Q36 24 27 24Q20 24 21 21Q25 14 18 11Q8 7 0 17Z" fill="url(#e1)" />
            <path d="M0 18Q2 9 12 9Q20 10 22 16Q15 12 12 20Q11 31 23 35Q5 39 0 22Z" fill="url(#e2)" />
            <path d="M12 17Q15 12 20 14Q13 18 16 23Q21 29 33 26Q29 34 20 36Q8 31 12 17Z" fill="#10509c" />
          </svg>
        </TaskCell>
        <TaskCell $w={75}>
          <svg width="32" height="28" viewBox="0 0 32 28"><path d="M0 2Q0 1 1 1H12L15 4H0Z" fill="#dc9a08" /><path d="M0 5H12L15 3H31Q32 3 32 4V26H0Z" fill="#fdd365" /><path d="M5 16Q5 15 6 15H25Q26 15 26 16V27H21V20H10V27H5Z" fill="#3f96dc" /><path d="M11 20H20V26H11Z" fill="#f4bd35" /></svg>
        </TaskCell>
        <TaskCell $w={74}>
          <svg width="35" height="36" viewBox="0 0 35 36"><defs><linearGradient id="shop" x1="0" y1="0" x2="0" y2="1"><stop stopColor="#0c64b4" /><stop offset="1" stopColor="#25345c" /></linearGradient></defs><path d="M9 7V1H26V7" fill="none" stroke="#35bbec" strokeWidth="2" /><path d="M0 5H35V32Q35 35 32 35H3Q0 35 0 32Z" fill="url(#shop)" /><path d="M10 13H17V20H10Z" fill="#f25022" /><path d="M18 13H25V20H18Z" fill="#7fba00" /><path d="M10 21H17V28H10Z" fill="#00a4ef" /><path d="M18 21H25V28H18Z" fill="#ffb900" /></svg>
        </TaskCell>
        <TaskCell $w={77}>
          <svg width="36" height="35" viewBox="0 0 36 35"><path d="M0 11L16 1Q18 0 20 1L36 11V20H0Z" fill="#0b5cab" /><path d="M3 11H33V22H3Z" fill="#f4f4f4" /><path d="M0 11L18 22L36 11V34H0Z" fill="#29a9e8" /><path d="M0 12L36 34H0Z" fill="#198ade" /><path d="M18 22L36 11V34Z" fill="#38bff1" /></svg>
        </TaskCell>
        <TaskCell $w={74}><Office w={32} h={34} id="t" /></TaskCell>
        <TaskCell $w={7} />
        <TaskCell $w={61} $open $shift={1}>
          <svg width="26" height="27" viewBox="0 0 26 27"><path d="M13 0Q18 3 26 3Q27 20 13 27Q-1 20 0 3Q8 3 13 0Z" /><path d="M13 0V27M0 13H26" stroke="#d3d3d3" strokeWidth="1.400" /></svg>
        </TaskCell>
        <Tray>
          <Weather>
            <svg width="39" height="38" viewBox="0 0 39 38"><defs><linearGradient id="cl" x1="0" y1="0" x2="0" y2="1"><stop stopColor="#cfe0fb" /><stop offset="1" stopColor="#83a6e6" /></linearGradient></defs><path d="M15 1Q22 6 19 14Q14 22 5 19Q1 18 1 15Q14 16 15 1Z" fill="#f3a623" /><path d="M9 36A8 8 0 0 1 8 22Q10 14 18 14Q26 14 28 21Q37 21 37 29Q37 36 30 36Z" fill="url(#cl)" /><circle cx="32.500" cy="5" r="4.500" fill="#c42b1c" /></svg>
            28°C Haze
          </Weather>
          <Cell $w={44}><svg width="19" height="12" viewBox="0 0 19 12"><path d="M1 10.500L9.500 1.500L18 10.500" {...line} strokeWidth="1.400" /></svg></Cell>
          <Cell $w={32}><svg width="18" height="24" viewBox="0 0 18 24"><g {...line} strokeWidth="1.300"><rect x="1" y="6" width="10.500" height="12" rx="2" /><path d="M12 10L16 7V17L12 14M3 2Q8 0 13 2M3 22Q8 24 13 22" /></g></svg></Cell>
          <Cell $w={36}><svg width="25" height="17" viewBox="0 0 25 17"><path d="M5 16A5 5 0 0 1 4 7Q6 1 12 1Q17 1 19 6Q24 7 24 11.500Q24 16 20 16Z" fill="#d9d9d9" stroke="#111" strokeWidth="1.300" /><path d="M4 7Q6 1 12 1Q17 1 19 6L11 9L3 14Q-1 9 4 7Z" fill="#7d7d7d" /></svg></Cell>
          <Cell $w={36}><svg width="25" height="20" viewBox="0 0 25 20"><g fill="none" stroke="#111" strokeWidth="1.300"><path d="M8 2H24V15H4V9M14 15V19M9 19H19M1 2H7V8H1ZM4 2V5" /></g></svg></Cell>
          <Cell $w={39}><svg width="23" height="20" viewBox="0 0 23 20"><g {...line} strokeWidth="1.300"><path d="M1 7H4L9 1V19L4 13H1ZM12 7Q14 10 12 13M15.500 4.500Q19 10 15.500 15.500M19 2Q25 10 19 18" /></g></svg></Cell>
          <Clock><div>6:00 AM</div><div>7/1/2023</div></Clock>
          <Cell $w={72} $drop={12}>
            <svg width="38" height="38" viewBox="0 0 38 38"><path d="M1 1H25V21H17L12 26V21H1Z" /><path d="M5 7H21M5 11.500H21M5 16H17" stroke="#ddd" strokeWidth="1.300" /><circle cx="25" cy="25" r="11.700" fill="#d3d3d3" fillOpacity=".85" stroke="#555" /><text x="25" y="31" textAnchor="middle" fontFamily="Open Sans, sans-serif" fontWeight="600" fontSize="17">5</text></svg>
          </Cell>
          <ShowDesktop />
        </Tray>
      </Taskbar>
    </Screen>
  );
}
